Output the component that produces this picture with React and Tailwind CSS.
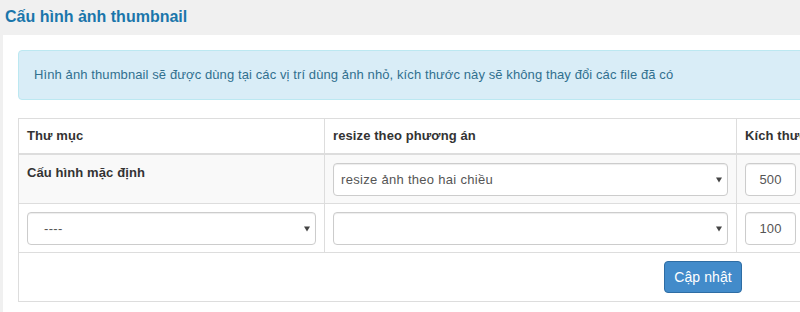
function Select({ value, pad = "pl-[16px]" }) {
  return (
    <div className="relative h-[33px] flex items-center rounded-[4px] border border-[#cccccc] bg-white shadow-[inset_0_1px_1px_rgba(0,0,0,0.075)]">
      <span className={`${pad} text-[13px] tracking-[0.3px] text-[#555555]`}>{value}</span>
      <span className="absolute right-[5px] top-1/2 -translate-y-1/2 w-0 h-0 border-l-[3px] border-r-[3px] border-t-[5px] border-l-transparent border-r-transparent border-t-[#444444]" />
    </div>
  );
}

function NumInput({ value }) {
  return (
    <div className="h-[33px] w-[51px] flex items-center justify-center rounded-[4px] border border-[#cccccc] bg-white text-[13px] text-[#555555] shadow-[inset_0_1px_1px_rgba(0,0,0,0.075)]">
      {value}
    </div>
  );
}

export default function App() {
  return (
    <div className="w-[800px] h-[312px] overflow-hidden bg-[#f0f0f0] font-['Liberation_Sans',Arial,sans-serif] tracking-[0.1px] text-[#333333]">
      {/* Tiêu đề */}
      <div className="h-[35px] pl-[5px] pt-[7px]">
        <h1 className="text-[16px] font-bold tracking-normal text-[#1a76ab] leading-[20px]">
          Cấu hình ảnh thumbnail
        </h1>
      </div>

      {/* Panel */}
      <div className="ml-[3px] h-[277px] bg-white pl-[15px] pt-[15px]">
        <div className="w-[800px] h-[50px] flex items-center pl-[15px] rounded-[4px] border border-[#bce8f1] bg-[#d9edf7] text-[13px] text-[#31708f]">
          Hình ảnh thumbnail sẽ được dùng tại các vị trí dùng ảnh nhỏ, kích thước này sẽ không thay đổi các file đã có
        </div>

        {/* Bảng */}
        <div className="mt-[18px] w-[900px] border border-[#dddddd] text-[13px]">
          <div className="grid grid-cols-[306px_412px_180px] h-[36px] border-b-2 border-[#dddddd] font-bold">
            <div className="px-[8px] flex items-center border-r border-[#dddddd]">Thư mục</div>
            <div className="px-[8px] flex items-center border-r border-[#dddddd]">resize theo phương án</div>
            <div className="px-[8px] flex items-center">Kích thước</div>
          </div>

          <div className="grid grid-cols-[306px_412px_180px] h-[49px] border-b border-[#dddddd] bg-[#f9f9f9]">
            <div className="px-[8px] pt-[8px] font-bold border-r border-[#dddddd]">Cấu hình mặc định</div>
            <div className="px-[8px] pt-[8px] border-r border-[#dddddd]">
              <Select value="resize ảnh theo hai chiều" pad="pl-[7px]" />
            </div>
            <div className="px-[8px] pt-[8px]">
              <NumInput value="500" />
            </div>
          </div>

          <div className="grid grid-cols-[306px_412px_180px] h-[49px] border-b border-[#dddddd]">
            <div className="px-[8px] pt-[8px] border-r border-[#dddddd]">
              <Select value="----" />
            </div>
            <div className="px-[8px] pt-[8px] border-r border-[#dddddd]">
              <Select value="" />
            </div>
            <div className="px-[8px] pt-[8px]">
              <NumInput value="100" />
            </div>
          </div>

          <div className="h-[48px] pt-[8px] pl-[645px]">
            <button className="h-[32px] w-[78px] rounded-[4px] border border-[#2e6da4] bg-[#428bca] text-[14px] text-white">
              Cập nhật
            </button>
          </div>
        </div>
      </div>
    </div>
  );
}
